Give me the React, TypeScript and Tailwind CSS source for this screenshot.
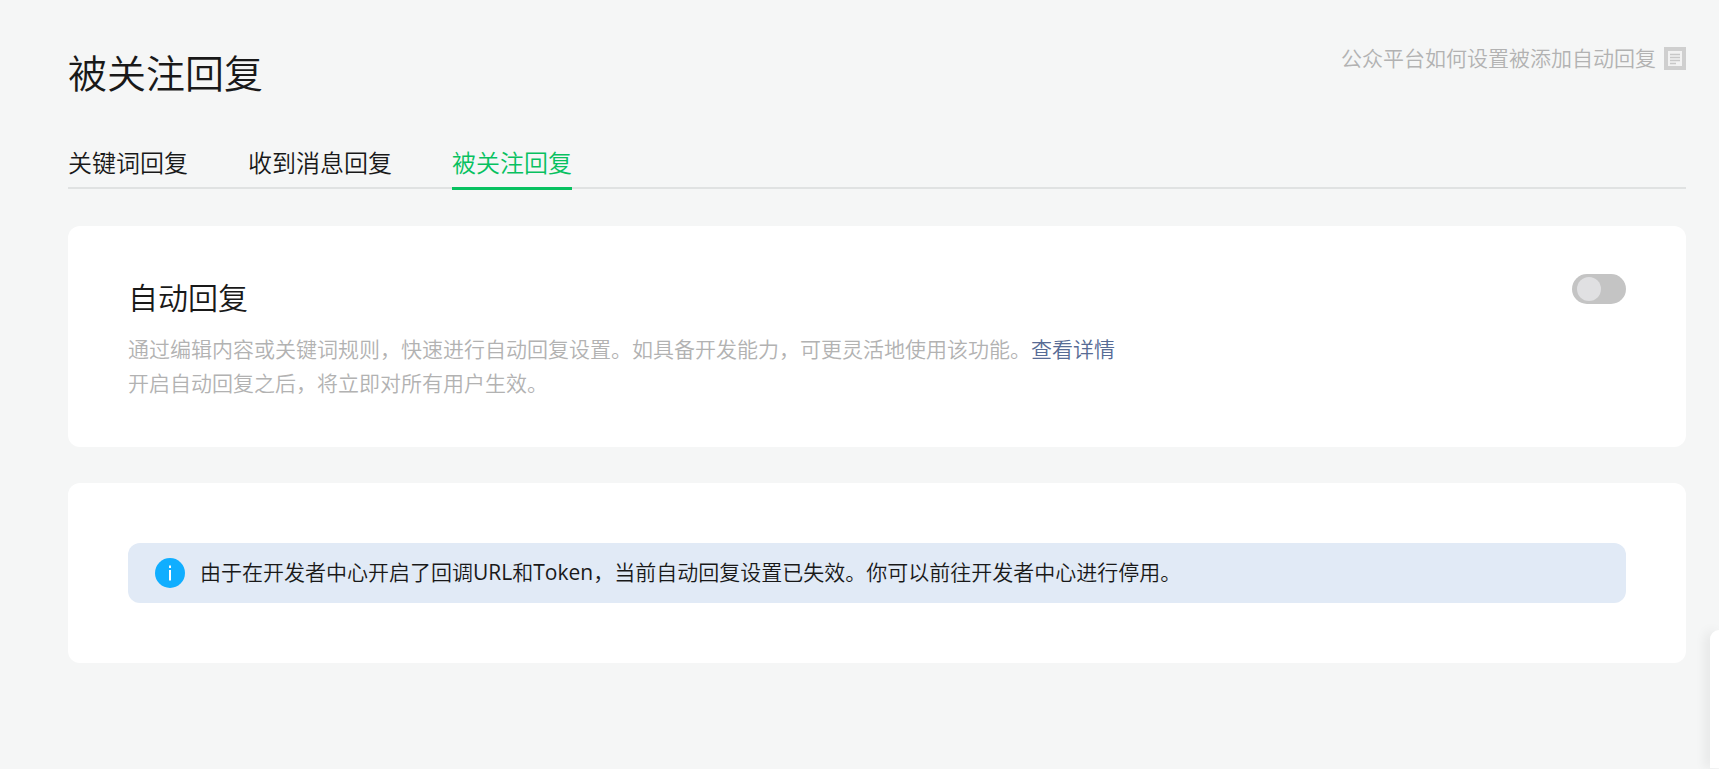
const font = "font-['Open_Sans','Noto_Sans_CJK_SC',sans-serif]"

function DocIcon() {
	return (
		<svg width="22" height="23" viewBox="0 0 22 23" className="ml-2">
			<rect x="0" y="0" width="22" height="23" fill="#cfcfcf" />
			<rect x="4" y="4" width="14" height="15" fill="#f2f2f2" />
			<path d="M6 7.5h10M6 10.5h10M6 13.5h10M6 16.5h6" stroke="#c8c8c8" strokeWidth="1.5" />
		</svg>
	)
}

function InfoIcon() {
	return (
		<svg width="30" height="30" viewBox="0 0 30 30" className="shrink-0">
			<circle cx="15" cy="15" r="15" fill="#10aeff" />
			<rect x="14" y="7.5" width="2" height="2.5" fill="#fff" />
			<rect x="14" y="12" width="2" height="10.5" fill="#fff" />
		</svg>
	)
}

export default function App() {
	return (
		<div className={`${font} font-[350] h-[769px] overflow-hidden bg-[#f5f6f6] relative`}>
			<div className="pl-[68px] pr-[33px]">
				<div className="flex justify-between items-start pt-[43px]">
					<h1 className="text-[39px] leading-[60px] text-[#191919]">被关注回复</h1>
					<a className="flex items-center text-[21px] leading-[30px] text-[#b2b2b2]">
						公众平台如何设置被添加自动回复
						<DocIcon />
					</a>
				</div>
				<div className="flex gap-[60px] mt-[33px] border-b-2 border-[#e0e2e2] h-[53px]">
					<span className="text-[24px] leading-[54px] text-[#191919]">关键词回复</span>
					<span className="text-[24px] leading-[54px] text-[#191919]">收到消息回复</span>
					<span className="text-[24px] leading-[54px] text-[#07c160] border-b-[3px] border-[#07c160] h-[54px]">被关注回复</span>
				</div>
				<section className="bg-white rounded-xl mt-[37px] h-[221px] px-[60px] pt-[48px] flex justify-between items-start">
					<div>
						<h2 className="text-[30px] leading-[46px] text-[#191919] mt-px">自动回复</h2>
						<p className="text-[21px] leading-[34px] text-[#b2b2b2] mt-[11px]">
							通过编辑内容或关键词规则，快速进行自动回复设置。如具备开发能力，可更灵活地使用该功能。<a className="text-[#576b95]">查看详情</a>
							<br />
							开启自动回复之后，将立即对所有用户生效。
						</p>
					</div>
					<div className="w-[54px] h-[30px] rounded-full bg-[#c4c4c4] flex items-center pl-[5px]">
						<div className="w-[24px] h-[24px] rounded-full bg-[#e0e0e2]"></div>
					</div>
				</section>
				<section className="bg-white rounded-xl mt-[36px] h-[180px] px-[60px] pt-[60px]">
					<div className="h-[60px] rounded-xl bg-[#e1eaf6] flex items-center pl-[27px]">
						<InfoIcon />
						<p className="ml-[15px] text-[21px] text-[#191919]">
							由于在开发者中心开启了回调<span className="font-normal">URL</span>和<span className="font-normal">Token</span>，当前自动回复设置已失效。你可以前往开发者中心进行停用。
						</p>
					</div>
				</section>
			</div>
			<div className="absolute right-0 top-[630px] w-[9px] h-[138px] bg-white rounded-tl-xl shadow-[-4px_0_12px_rgba(0,0,0,0.08)]"></div>
		</div>
	)
}
